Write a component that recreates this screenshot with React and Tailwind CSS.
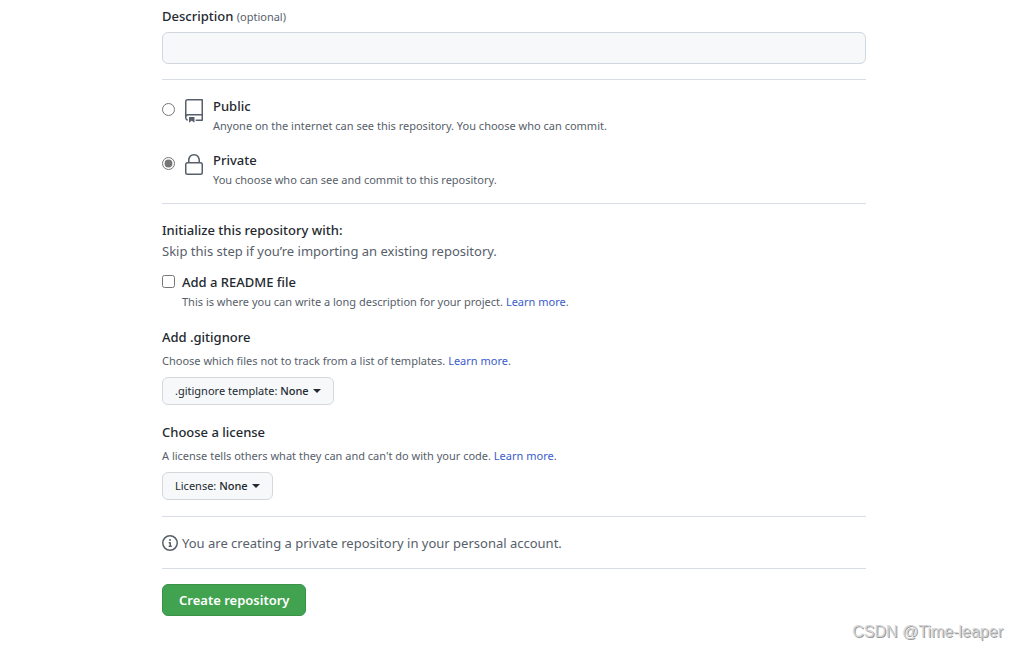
import React, { useState } from 'react';

const RepoIcon = () => (
    <svg viewBox="0 0 24 24" width="24" height="24" fill="currentColor" aria-hidden="true">
        <path fillRule="evenodd" d="M3 2.75A2.75 2.75 0 015.75 0h14.5a.75.75 0 01.75.75v20.5a.75.75 0 01-.75.75h-6a.75.75 0 010-1.5h5.25v-4H6A1.5 1.5 0 004.5 18v.75c0 .716.43 1.334 1.05 1.605a.75.75 0 01-.6 1.374A3.25 3.25 0 013 18.75v-16zM19.5 1.5V15H6c-.546 0-1.059.146-1.5.401V2.75c0-.69.56-1.25 1.25-1.25H19.5z" />
        <path d="M7 18.25a.25.25 0 01.25-.25h5a.25.25 0 01.25.25v5.01a.25.25 0 01-.397.201l-2.206-1.604a.25.25 0 00-.294 0L7.397 23.46a.25.25 0 01-.397-.2v-5.01z" />
    </svg>
);

const LockIcon = () => (
    <svg viewBox="0 0 24 24" width="24" height="24" fill="currentColor" aria-hidden="true">
        <path fillRule="evenodd" d="M6 9V7.25C6 3.845 8.503 1 12 1s6 2.845 6 6.25V9h.5a2.5 2.5 0 012.5 2.5v8a2.5 2.5 0 01-2.5 2.5h-13A2.5 2.5 0 013 19.5v-8A2.5 2.5 0 015.5 9H6zm1.5-1.75C7.5 4.58 9.422 2.5 12 2.5c2.578 0 4.5 2.08 4.5 4.75V9h-9V7.25zm-3 4.25a1 1 0 011-1h13a1 1 0 011 1v8a1 1 0 01-1 1h-13a1 1 0 01-1-1v-8z" />
    </svg>
);

const InfoIcon = () => (
    <svg viewBox="0 0 16 16" width="16" height="16" fill="currentColor" aria-hidden="true">
        <path fillRule="evenodd" d="M8 1.5a6.5 6.5 0 100 13 6.5 6.5 0 000-13zM0 8a8 8 0 1116 0A8 8 0 010 8zm6.5-.25A.75.75 0 017.25 7h1a.75.75 0 01.75.75v2.75h.25a.75.75 0 010 1.5h-2a.75.75 0 010-1.5h.25v-2h-.25a.75.75 0 01-.75-.75zM8 6a1 1 0 100-2 1 1 0 000 2z" />
    </svg>
);

const LearnMore = () => (
    <>
        <a href="#learn-more" className="text-[#3a5ccc] hover:underline">Learn more</a>.
    </>
);

const VisibilityOption = ({ value, title, note, icon, checked, onChange }) => (
    <div className="flex">
        <input
            type="radio"
            id={`visibility-${value}`}
            name="visibility"
            value={value}
            checked={checked}
            onChange={onChange}
            className="mt-[7px] h-[13px] w-[13px] shrink-0 accent-[#757575]"
        />
        <span className="ml-[7px] mt-[3px] shrink-0 text-[#57606a]">{icon}</span>
        <label htmlFor={`visibility-${value}`} className="ml-[7px]">
            <span className="block text-[13px] leading-5 font-medium">{title}</span>
            <span className="block text-[11px] leading-5 text-[#57606a]">{note}</span>
        </label>
    </div>
);

const MenuButton = ({ label, value }) => (
    <button
        type="button"
        aria-haspopup="menu"
        className="flex h-7 items-center rounded-md border border-[#d5d8da] bg-[#f6f8fa] px-3 text-[11px] leading-5"
    >
        <span>{label}: <span className="font-medium">{value}</span></span>
        <span className="ml-1 border-x-4 border-t-4 border-x-transparent border-t-current" />
    </button>
);

const App = () => {
    const [visibility, setVisibility] = useState('private');
    const [description, setDescription] = useState('');
    const [readme, setReadme] = useState(false);

    return (
        <div className="relative bg-white pl-[9px] pt-[6px] pb-[34px] text-[#24292f] font-['Noto_Sans',sans-serif]">
            <form className="mx-auto max-w-[704px]" onSubmit={(e) => e.preventDefault()}>
                {/* Description */}
                <label htmlFor="description" className="block text-[13px] leading-5 font-medium">
                    Description <span className="text-[11px] font-normal text-[#57606a]">(optional)</span>
                </label>
                <input
                    type="text"
                    id="description"
                    value={description}
                    onChange={(e) => setDescription(e.target.value)}
                    className="mt-[5px] block h-8 w-full rounded-md border border-[#d0d7de] bg-[#f6f8fa] px-3 text-[13px] focus:outline-none focus:ring-2 focus:ring-blue-500"
                />

                {/* Visibility */}
                <div className="mt-[15px] space-y-[14px] border-y border-[#d8dee4] pt-4 pb-[13px]">
                    <VisibilityOption
                        value="public"
                        title="Public"
                        note="Anyone on the internet can see this repository. You choose who can commit."
                        icon={<RepoIcon />}
                        checked={visibility === 'public'}
                        onChange={() => setVisibility('public')}
                    />
                    <VisibilityOption
                        value="private"
                        title="Private"
                        note="You choose who can see and commit to this repository."
                        icon={<LockIcon />}
                        checked={visibility === 'private'}
                        onChange={() => setVisibility('private')}
                    />
                </div>

                {/* Initial files */}
                <h2 className="mt-4 text-[13px] leading-5 font-medium">Initialize this repository with:</h2>
                <p className="text-[13px] leading-[22px] text-[#57606a]">
                    Skip this step if you’re importing an existing repository.
                </p>

                <div className="mt-[10px] flex">
                    <input
                        type="checkbox"
                        id="readme"
                        checked={readme}
                        onChange={(e) => setReadme(e.target.checked)}
                        className="mt-[3px] h-[13px] w-[13px] shrink-0"
                    />
                    <div className="ml-[7px]">
                        <label htmlFor="readme" className="block text-[13px] leading-5 font-medium">
                            Add a README file
                        </label>
                        <p className="text-[11px] leading-5 text-[#57606a]">
                            This is where you can write a long description for your project. <LearnMore />
                        </p>
                    </div>
                </div>

                <h3 className="mt-[15px] text-[13px] leading-5 font-medium">Add .gitignore</h3>
                <p className="mt-1 mb-[6px] text-[11px] leading-5 text-[#57606a]">
                    Choose which files not to track from a list of templates. <LearnMore />
                </p>
                <MenuButton label=".gitignore template" value="None" />

                <h3 className="mt-[17px] text-[13px] leading-5 font-medium">Choose a license</h3>
                <p className="mt-1 mb-[6px] text-[11px] leading-5 text-[#57606a]">
                    A license tells others what they can and can't do with your code. <LearnMore />
                </p>
                <MenuButton label="License" value="None" />

                <div className="mt-4 flex items-center gap-1 border-y border-[#d8dee4] pt-4 pb-[15px] text-[#57606a]">
                    <InfoIcon />
                    <p className="text-[13px] leading-5">You are creating a private repository in your personal account.</p>
                </div>

                <button
                    type="submit"
                    className="mt-[15px] h-8 rounded-md border border-[#3a9249] bg-[#41a350] px-4 text-[13px] leading-5 font-semibold text-white"
                >
                    Create repository
                </button>
            </form>

            <p className="absolute right-4 bottom-[6px] font-['Liberation_Sans',sans-serif] text-base text-[#d4d4d4] [text-shadow:1px_1px_0_#999999]">
                CSDN @Time-leaper
            </p>
        </div>
    );
};

export default App;
